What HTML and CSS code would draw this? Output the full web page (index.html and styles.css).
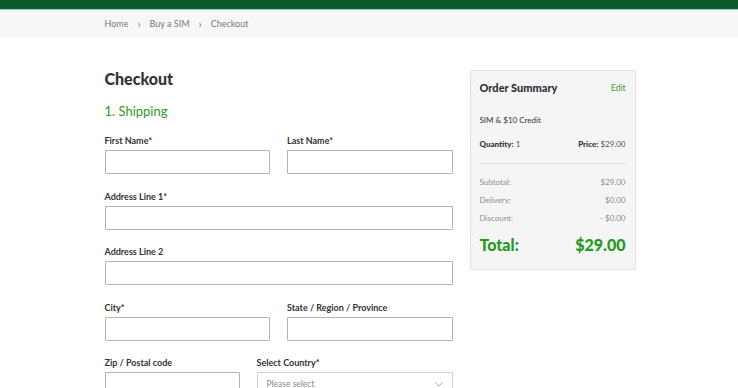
FILE: index.html
```html
<!DOCTYPE html>
<html lang="en">
<head>
    <meta charset="UTF-8">
    <meta name="viewport" content="width=device-width, initial-scale=1.0">
    <title>Checkout</title>
    <link rel="stylesheet" href="styles.css">
</head>
<body>
    <div class="topbar"></div>
    <div class="crumbs">
        <div class="wrap">
            <a href="#">Home</a>
            <span class="sep">&rsaquo;</span>
            <a href="#">Buy a SIM</a>
            <span class="sep">&rsaquo;</span>
            <span>Checkout</span>
        </div>
    </div>

    <div class="wrap page">
        <form class="checkout">
            <h1>Checkout</h1>
            <h2>1. Shipping</h2>
            <div class="row two">
                <div class="field">
                    <label for="first">First Name*</label>
                    <input type="text" id="first">
                </div>
                <div class="field">
                    <label for="last">Last Name*</label>
                    <input type="text" id="last">
                </div>
            </div>
            <div class="row">
                <div class="field">
                    <label for="addr1">Address Line 1*</label>
                    <input type="text" id="addr1">
                </div>
            </div>
            <div class="row">
                <div class="field">
                    <label for="addr2">Address Line 2</label>
                    <input type="text" id="addr2">
                </div>
            </div>
            <div class="row two">
                <div class="field">
                    <label for="city">City*</label>
                    <input type="text" id="city">
                </div>
                <div class="field">
                    <label for="state">State / Region / Province</label>
                    <input type="text" id="state">
                </div>
            </div>
            <div class="row zip">
                <div class="field">
                    <label for="zip">Zip / Postal code</label>
                    <input type="text" id="zip">
                </div>
                <div class="field">
                    <label for="country">Select Country*</label>
                    <div class="select">
                        <span>Please select</span>
                        <svg width="8" height="5" viewBox="0 0 8 5"><path d="M0.5 0.5 L4 4 L7.5 0.5" fill="none" stroke="#aaa" stroke-width="1"/></svg>
                    </div>
                </div>
            </div>
        </form>

        <aside class="summary">
            <div class="summary-head">
                <h3>Order Summary</h3>
                <a href="#">Edit</a>
            </div>
            <p class="item">SIM &amp; $10 Credit</p>
            <div class="line qty">
                <span><b>Quantity:</b> 1</span>
                <span><b>Price:</b> $29.00</span>
            </div>
            <div class="totals">
                <div class="line"><span>Subtotal:</span><span>$29.00</span></div>
                <div class="line"><span>Delivery:</span><span>$0.00</span></div>
                <div class="line"><span>Discount:</span><span>- $0.00</span></div>
            </div>
            <div class="line total">
                <span>Total:</span>
                <span>$29.00</span>
            </div>
        </aside>
    </div>
</body>
</html>
```

FILE: styles.css
```css
body {
    margin: 0;
    font-family: Lato, "Open Sans", Arial, sans-serif;
    color: #333;
    background: white;
}
.topbar {
    height: 9px;
    background-color: #0b5a2c;
    border-bottom: 1px solid #8fd6b8;
}
.crumbs {
    background-color: #f7f7f7;
    height: 27px;
    font-size: 9px;
    color: #777;
}
.crumbs .wrap {
    display: flex;
    align-items: center;
    height: 100%;
    gap: 8px;
}
.crumbs a {
    color: #777;
    text-decoration: none;
}
.crumbs .sep {
    font-size: 11px;
    margin: 0 1px;
}
.wrap {
    width: 531px;
    margin: 0 auto;
    padding-left: 2px;
}
.page {
    display: grid;
    grid-template-columns: 348px 166px;
    gap: 17px;
    align-items: start;
    padding-top: 34px;
}
h1 {
    font-size: 16px;
    font-weight: 900;
    margin: 0;
    line-height: 15px;
    color: #2e3338;
}
h2 {
    font-size: 13px;
    font-weight: 400;
    color: #2f9a2a;
    margin: 16px 0 0;
    line-height: 18px;
}
.row {
    display: grid;
    grid-template-columns: 1fr;
    margin-top: 15px;
}
.row + .row {
    margin-top: 16.5px;
}
.row.two {
    grid-template-columns: 1fr 1fr;
    gap: 17px;
}
.row.zip {
    grid-template-columns: 135px 1fr;
    gap: 17px;
}
label {
    display: block;
    font-size: 9px;
    font-weight: 700;
    color: #333;
    margin-bottom: 4px;
    line-height: 11px;
}
input,
.select {
    width: 100%;
    height: 24px;
    border: 1px solid #b3b3b3;
    border-radius: 1px;
    box-sizing: border-box;
    background: white;
    margin: 0;
}
.select {
    display: flex;
    justify-content: space-between;
    align-items: center;
    padding: 0 9px;
    font-size: 8.5px;
    color: #888;
    border-color: #cfcfcf;
}
.summary {
    background-color: #f5f5f5;
    border: 1px solid #e3e3e3;
    padding: 10px 9px 15px;
    font-size: 8px;
    margin-top: -1px;
}
.summary-head {
    display: flex;
    justify-content: space-between;
    align-items: center;
}
.summary h3 {
    font-size: 11px;
    font-weight: 900;
    margin: 0;
    line-height: 14px;
    color: #2e3338;
}
.summary-head a {
    color: #3a9a2c;
    text-decoration: none;
    font-size: 8.5px;
}
.item {
    margin: 20px 0 0;
    color: #333;
}
.line {
    display: flex;
    justify-content: space-between;
    line-height: 10px;
}
.qty {
    margin-top: 14px;
    padding-bottom: 14px;
    border-bottom: 1px solid #ddd;
    color: #555;
}
.qty b {
    color: #333;
    font-weight: 900;
}
.totals {
    margin-top: 13px;
    color: #8c8c8c;
}
.totals .line + .line {
    margin-top: 8px;
}
.total {
    margin-top: 13px;
    font-size: 16px;
    font-weight: 900;
    color: #1f9a1f;
    line-height: 18px;
}
```
